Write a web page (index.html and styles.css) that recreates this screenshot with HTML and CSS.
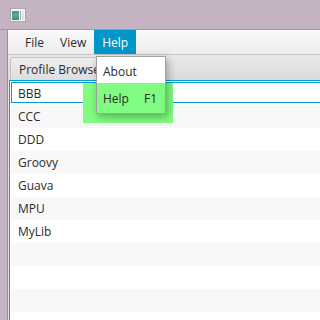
FILE: index.html
```html
<!DOCTYPE html>
<html lang="en">
<head>
    <meta charset="UTF-8">
    <title>Profile Browser</title>
    <link rel="stylesheet" href="styles.css">
</head>
<body>
    <div class="titlebar">
        <svg class="app-icon" width="16" height="14" viewBox="0 0 16 14">
            <defs>
                <linearGradient id="ig" x1="0" y1="0" x2="0" y2="1">
                    <stop offset="0" stop-color="#4b8fb5"/>
                    <stop offset="0.5" stop-color="#5aa88e"/>
                    <stop offset="1" stop-color="#3c8d6a"/>
                </linearGradient>
            </defs>
            <rect x="0.5" y="0.5" width="15" height="13" fill="#f4f4f4" stroke="#a9a9a9"/>
            <rect x="2" y="3" width="7" height="9" fill="url(#ig)"/>
            <rect x="10" y="3" width="1" height="9" fill="#9fb3b0"/>
            <rect x="12" y="3" width="2" height="9" fill="#dfe6e6"/>
        </svg>
    </div>

    <div class="window">
        <div class="menubar">
            <span class="menu">File</span>
            <span class="menu">View</span>
            <span class="menu active">Help</span>
        </div>

        <div class="tab-header">
            <div class="tab">Profile Browser</div>
        </div>

        <div class="tab-content">
            <div class="list">
                <div class="row focused">BBB</div>
                <div class="row">CCC</div>
                <div class="row">DDD</div>
                <div class="row">Groovy</div>
                <div class="row">Guava</div>
                <div class="row">MPU</div>
                <div class="row">MyLib</div>
                <div class="row"></div>
                <div class="row"></div>
                <div class="row"></div>
                <div class="row"></div>
            </div>
        </div>
    </div>

    <!-- highlight behind the open menu -->
    <div class="highlight"></div>

    <div class="popup">
        <div class="popup-item">About</div>
        <div class="popup-item selected"><span>Help</span><span class="accel">F1</span></div>
    </div>
</body>
</html>
```

FILE: styles.css
```css
body {
    margin: 0;
    padding: 0;
    background-color: #c3b3c3;
    font-family: "Open Sans", "Noto Sans", sans-serif;
    font-size: 12px;
    color: #2b2b2b;
    width: 320px;
    height: 320px;
    overflow: hidden;
    position: relative;
}
.titlebar {
    height: 30px;
    box-sizing: border-box;
    padding: 8px 0 0 10px;
    border-bottom: 1px solid #a497a5;
}
.app-icon {
    display: block;
}
.window {
    margin-left: 7px;
    border-left: 1px solid #9a8c9b;
    background-color: #fff;
    height: 290px;
    display: flex;
    flex-direction: column;
    overflow: hidden;
}
.menubar {
    flex-shrink: 0;
    height: 24px;
    display: flex;
    align-items: stretch;
    padding-left: 9px;
    background: linear-gradient(#fafafa, #ececec);
    border-bottom: 1px solid #c6c6c6;
}
.menu {
    padding: 0 8px;
    display: flex;
    align-items: center;
}
.menu.active {
    background-color: #0096c9;
    color: #fff;
}
.tab-header {
    flex-shrink: 0;
    height: 25px;
    box-sizing: border-box;
    padding: 2px 0 0 2px;
    background: linear-gradient(#e9e9e9, #dadada);
    display: flex;
}
.tab {
    padding: 0 16px 0 8px;
    border: 1px solid #c2c2c2;
    border-bottom: none;
    border-radius: 3px 3px 0 0;
    background: linear-gradient(#eeeeee, #dedede);
    display: flex;
    align-items: center;
}
.tab-content {
    flex: 1;
    min-height: 0;
    padding-left: 1px;
    background-color: #e4e4e4;
    display: flex;
    align-items: flex-start;
}
.list {
    flex: 1;
    border-top: 1px solid #039ed3;
    border-left: 1px solid #039ed3;
    padding: 1px 0 0 1px;
    background-color: #fff;
    overflow: hidden;
}
.row {
    height: 23px;
    line-height: 23px;
    padding-left: 7px;
    position: relative;
}
.row:nth-child(even) {
    background-color: #f8f8f8;
}
/* focus ring runs on past the right edge of the cut-off window */
.row.focused::after {
    content: "";
    position: absolute;
    left: 0;
    top: 0;
    right: -4px;
    bottom: 2px;
    border: 1px solid #039ed3;
}
.highlight {
    position: absolute;
    left: 83px;
    top: 83px;
    width: 90px;
    height: 40px;
    background-color: #80fc80;
}
.popup {
    position: absolute;
    left: 96px;
    top: 56px;
    width: 68px;
    height: 53px;
    padding-top: 3px;
    border: 1px solid #a0a0a0;
    background-color: #fff;
    box-shadow: 2px 3px 8px rgba(0, 0, 0, 0.3);
}
.popup-item {
    height: 23px;
    display: flex;
    align-items: center;
    padding-left: 6px;
}
.popup-item.selected {
    height: 30px;
    background-color: #80fc80;
}
.accel {
    margin-left: 15px;
}
```
